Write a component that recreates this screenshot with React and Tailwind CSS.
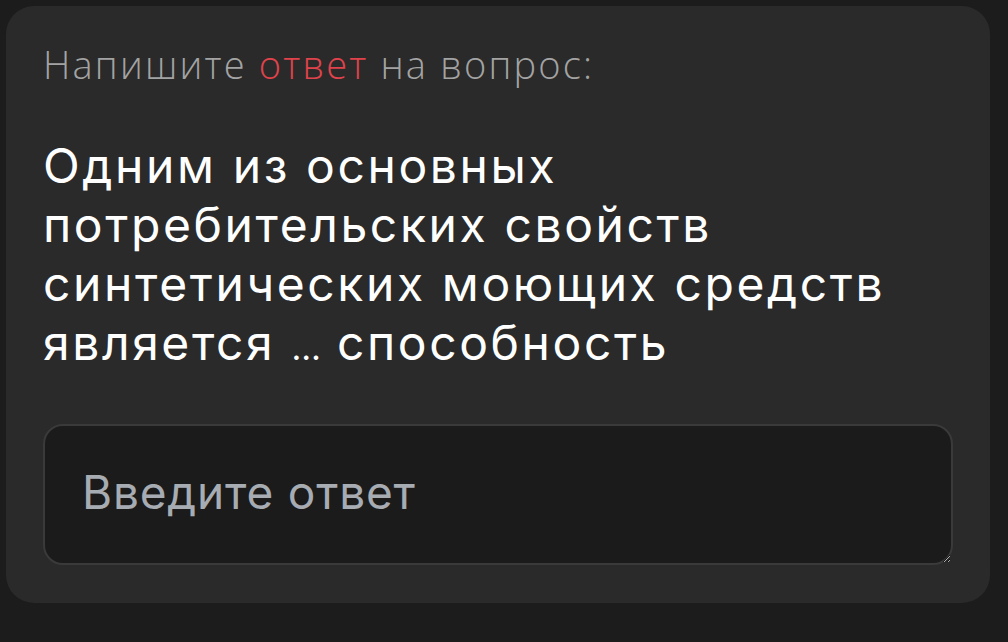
export default function App() {
  return (
    <div className="w-full bg-[#1c1c1c] pt-[6px] pl-[6px] pr-[18px]" style={{ minHeight: 642 }}>
      <div className="rounded-[28px] bg-[#2a2a2a] pl-[37px] pr-[37px] pt-[36px] pb-[38px]">
        <p className="font-['Open_Sans',sans-serif] text-[38px] font-light leading-[44px] tracking-[2.2px] text-[#a3a3a3]">
          Напишите <span className="text-[#e0434b]">ответ</span> на вопрос:
        </p>
        <h1 className="mt-[50px] max-w-[900px] font-['Inter',sans-serif] text-[48px] leading-[59px] tracking-[2.6px] text-white">
          Одним из основных потребительских свойств синтетических моющих средств является{' '}
          <span className="text-[34px] leading-none tracking-normal">…</span> способность
        </h1>
        <textarea
          placeholder="Введите ответ"
          className="mt-[52px] block h-[141px] w-full rounded-[20px] border-2 border-[#3a3a3a] bg-[#1b1b1b] px-[37px] pt-[38px] font-['Inter',sans-serif] text-[46px] leading-[56px] tracking-[0.8px] text-white placeholder:text-[#a7abb2] outline-none"
        />
      </div>
    </div>
  );
}
